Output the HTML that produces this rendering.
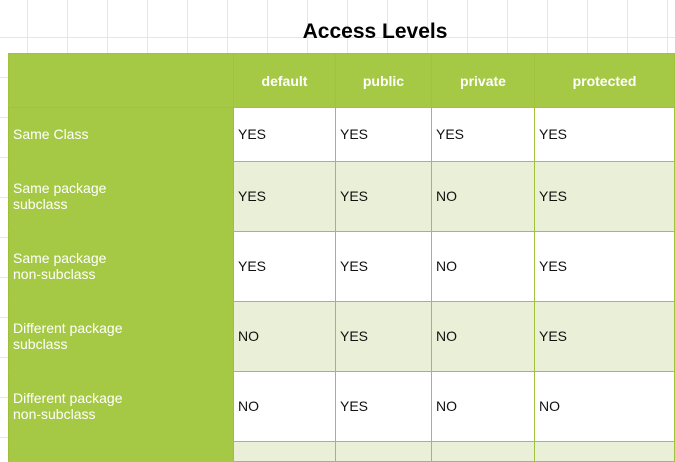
<!DOCTYPE html>
<html><head><style>
body{margin:0;width:675px;height:445px;overflow:hidden;background:#fff;
background-image:linear-gradient(#e6e6e6 1px,transparent 1px),linear-gradient(90deg,#e6e6e6 1px,transparent 1px);
background-size:40px 40px;background-position:27px 37px;font-family:"Liberation Sans",Arial,sans-serif;position:relative}
.t{position:absolute;left:0;width:750px;top:20px;text-align:center;font-weight:bold;font-size:21px;color:#000}
table{position:absolute;left:8px;top:53px;border-collapse:collapse;font-size:14px;table-layout:fixed;width:666px}
td{border:1px solid #a3c23b;padding:0 0 1px 4px;color:#111;vertical-align:middle;background:#fff}
tr.h td{background:#a6c945;color:#fff;font-weight:bold;text-align:center;padding:0;height:53px}
td.l{background:#a6c945;color:#fff;border-color:#a6c945 #9fbf3a;}
tr.g td{background:#e9f0d7}
tr.g td.l{background:#a6c945}
</style></head><body>
<div class="t">Access Levels</div>
<table>
<colgroup><col style="width:225px"><col style="width:102px"><col style="width:96px"><col style="width:103px"><col style="width:140px"></colgroup>
<tr class="h"><td></td><td>default</td><td>public</td><td>private</td><td>protected</td></tr>
<tr style="height:54px"><td class="l">Same Class</td><td>YES</td><td>YES</td><td>YES</td><td>YES</td></tr>
<tr class="g" style="height:70px"><td class="l">Same package<br>subclass</td><td>YES</td><td>YES</td><td>NO</td><td>YES</td></tr>
<tr style="height:70px"><td class="l">Same package<br>non-subclass</td><td>YES</td><td>YES</td><td>NO</td><td>YES</td></tr>
<tr class="g" style="height:70px"><td class="l">Different package<br>subclass</td><td>NO</td><td>YES</td><td>NO</td><td>YES</td></tr>
<tr style="height:70px"><td class="l">Different package<br>non-subclass</td><td>NO</td><td>YES</td><td>NO</td><td>NO</td></tr>
<tr class="g" style="height:20px"><td class="l"></td><td></td><td></td><td></td><td></td></tr>
</table>
</body></html>
